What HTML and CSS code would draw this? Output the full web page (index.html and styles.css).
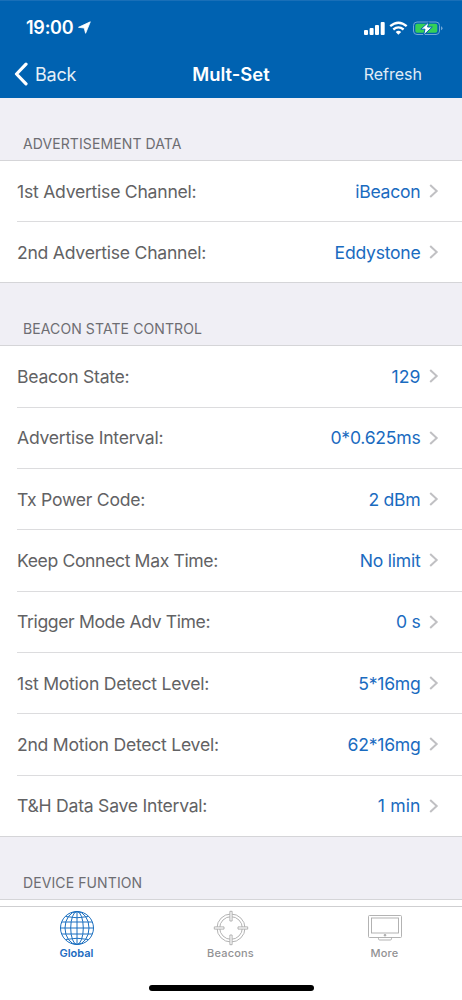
FILE: index.html
```html
<!DOCTYPE html>
<html lang="en">
<head>
<meta charset="utf-8">
<title>Mult-Set</title>
<link rel="stylesheet" href="styles.css">
</head>
<body>
<svg class="defs" width="0" height="0"><symbol id="chev" viewBox="0 0 10 16"><path d="M1.2 1.9 7.7 8 1.2 14.1" fill="none" stroke="#c0c0c3" stroke-width="2"/></symbol></svg>
<div class="screen">
  <header class="top">
    <div class="status">
      <span class="time">19:00</span>
      <svg class="loc" width="13" height="13" viewBox="0 0 13 13"><path d="M12.3.8 7.600 12.300 6.200 7 .5 6.300z" fill="#fff" stroke="#fff" stroke-width=".8" stroke-linejoin="round"/></svg>
      <svg class="signals" width="80" height="16" viewBox="0 0 80 16">
        <g fill="#fff"><rect x="1" y="9" width="4" height="5" rx="1"/><rect x="6.6" y="7" width="4" height="7" rx="1"/><rect x="12" y="4" width="4" height="10" rx="1"/><rect x="17.7" y="1" width="4" height="13" rx="1"/></g>
        <g fill="none" stroke="#fff" stroke-width="2.3"><path d="M27.2 5.2q8.2-7 16.5 0"/><path d="M30.3 8.5q5.1-4.2 10.3 0"/></g>
        <path d="M32.7 10.9q2.8-2.2 5.5 0L35.4 13.8z" fill="#fff"/>
        <rect x="50.5" y="1" width="26" height="12.5" rx="3.5" fill="none" stroke="#73a7d6" stroke-width="1"/>
        <rect x="52.3" y="2.8" width="22" height="9" rx="1.8" fill="#34d058"/>
        <path d="M78 5.2v4q1.5-.7 1.5-2t-1.5-2z" fill="#73a7d6"/>
        <path d="M66 .8 57.800 8.200h4.200L60.500 14.200 69.300 6h-4.700z" fill="#fff" stroke="#0062b1" stroke-width="1"/>
      </svg>
    </div>
    <nav class="nav">
      <div class="back"><svg width="15" height="24" viewBox="0 0 15 24"><path d="M12 2.200 2.500 12 12 21.800" fill="none" stroke="#fff" stroke-width="3.200" stroke-linecap="round" stroke-linejoin="round"/></svg><span>Back</span></div>
      <h1>Mult-Set</h1>
      <div class="refresh"><span>Refresh</span></div>
    </nav>
  </header>
  <main class="list">
    <h2>ADVERTISEMENT DATA</h2>
    <section class="group">
      <div class="row"><span class="label">1st Advertise Channel:</span><span class="value">iBeacon</span><svg class="chev"><use href="#chev"/></svg></div>
      <div class="row"><span class="label">2nd Advertise Channel:</span><span class="value">Eddystone</span><svg class="chev"><use href="#chev"/></svg></div>
    </section>
    <h2>BEACON STATE CONTROL</h2>
    <section class="group">
      <div class="row"><span class="label">Beacon State:</span><span class="value numeric">129</span><svg class="chev"><use href="#chev"/></svg></div>
      <div class="row"><span class="label">Advertise Interval:</span><span class="value">0*0.625ms</span><svg class="chev"><use href="#chev"/></svg></div>
      <div class="row"><span class="label">Tx Power Code:</span><span class="value">2 dBm</span><svg class="chev"><use href="#chev"/></svg></div>
      <div class="row"><span class="label tight">Keep Connect Max Time:</span><span class="value">No limit</span><svg class="chev"><use href="#chev"/></svg></div>
      <div class="row"><span class="label tight">Trigger Mode Adv Time:</span><span class="value">0 s</span><svg class="chev"><use href="#chev"/></svg></div>
      <div class="row"><span class="label">1st Motion Detect Level:</span><span class="value">5*16mg</span><svg class="chev"><use href="#chev"/></svg></div>
      <div class="row"><span class="label">2nd Motion Detect Level:</span><span class="value">62*16mg</span><svg class="chev"><use href="#chev"/></svg></div>
      <div class="row"><span class="label">T&amp;H Data Save Interval:</span><span class="value numeric">1 min</span><svg class="chev"><use href="#chev"/></svg></div>
    </section>
    <h2>DEVICE FUNTION</h2>
    <section class="group next"></section>
  </main>
  <footer class="tabs">
    <div class="tab active">
      <svg width="36" height="36" viewBox="0 0 36 36" fill="none" stroke="#1a6fc0" stroke-width="1"><circle cx="18" cy="18" r="16.500"/><ellipse cx="18" cy="18" rx="12" ry="16.500"/><ellipse cx="18" cy="18" rx="6.300" ry="16.500"/><path d="M18 1.500v33M1.500 18h33M2.700 12h30.600M2.700 24h30.600M6.500 6.500q11.500 2.500 23 0M6.500 29.500q11.500-2.500 23 0"/></svg>
      <span>Global</span>
    </div>
    <div class="tab">
      <svg width="36" height="36" viewBox="0 0 36 36" fill="none" stroke="#aaa" stroke-width=".9"><circle cx="18" cy="18" r="14"/><circle cx="18" cy="18" r="11.300"/><g fill="#fff"><path d="M16.900 1.300h2.200V11h-2.200zM16.900 25h2.200v9.700h-2.200zM1.300 16.900H11v2.200H1.300zM25 16.900h9.700v2.200H25z"/></g></svg>
      <span>Beacons</span>
    </div>
    <div class="tab">
      <svg width="36" height="36" viewBox="0 0 36 36" fill="none" stroke="#aaa" stroke-width=".9"><rect x="1.500" y="5.500" width="33" height="22" rx="1"/><rect x="4.500" y="8" width="27" height="15"/><path d="M11.500 27.500v1.300q0 1.200 1.200 1.200h10.600q1.200 0 1.200-1.200v-1.300"/><circle cx="18" cy="25.200" r=".9" fill="#aaa"/></svg>
      <span>More</span>
    </div>
    <div class="home"></div>
  </footer>
</div>
</body>
</html>
```
FILE: styles.css
```css
* { box-sizing: border-box; }
body { margin: 0; font-family: Inter, "Liberation Sans", sans-serif; background: #fff; }
.defs { display: none; }
.screen { width: 462px; height: 1000px; display: flex; flex-direction: column; overflow: hidden; background: #f0eff5; }
.top { height: 98px; flex: none; background: #0062b1; color: #fff; border-top: 1px solid #196fb8; }
.status { height: 49px; display: flex; align-items: flex-start; padding: 0 19px 0 26px; }
.time { width: 51.5px; line-height: 22px; margin-top: 16px; font-size: 18px; font-weight: 600; letter-spacing: -0.25px; white-space: nowrap; }
.loc { margin-top: 20px; }
.signals { margin: 20px 0 0 auto; }
.nav { height: 48px; display: grid; grid-template-columns: 1fr auto 1fr; align-items: center; }
.back { display: flex; align-items: center; gap: 6px; padding-left: 14px; font-size: 18px; letter-spacing: -0.2px; color: #e5eff7; }
.nav h1 { margin: 0; font-size: 18.4px; font-weight: 600; line-height: 24px; }
.refresh { padding-right: 40px; text-align: right; font-size: 16px; color: #e0ecf6; }
.list { flex: none; height: 808px; overflow: hidden; }
h2 { margin: 0; height: 62px; padding: 36px 0 0 23px; font-size: 14px; line-height: 20px; font-weight: 400; color: #6d6d72; letter-spacing: 0.1px; }
.group { background: #fff; border: solid #d5d5d8; border-width: 1px 0; }
.next { height: 20px; }
.row { height: 61.33px; margin-left: 17px; display: flex; align-items: center; border-bottom: 1px solid #dcdcde; padding-right: 23px; font-size: 17.6px; letter-spacing: -0.25px; font-feature-settings: "calt" 0; color: #626264; }
.row:last-child { border-bottom: 0; height: 60px; }
.tight { letter-spacing: -0.38px; }
.value { margin-left: auto; color: #1a6bbf; }
.numeric { letter-spacing: 0.1px; }
.chev { width: 10px; height: 16px; margin-left: 8.5px; }
.tabs { height: 94px; flex: none; background: #fff; border-top: 1px solid #cfcfd1; display: grid; grid-template-columns: repeat(3, 1fr); grid-template-rows: 78px 5px; }
.tab { display: flex; flex-direction: column; align-items: center; padding: 3px 1px 0 0; font-size: 11px; line-height: 14px; font-weight: 500; letter-spacing: 0.2px; color: #929294; }
.active { color: #1a6bbf; font-weight: 600; letter-spacing: 0; }
.home { grid-column: 1 / -1; justify-self: center; width: 165px; height: 6px; border-radius: 3px; background: #000; }
```
